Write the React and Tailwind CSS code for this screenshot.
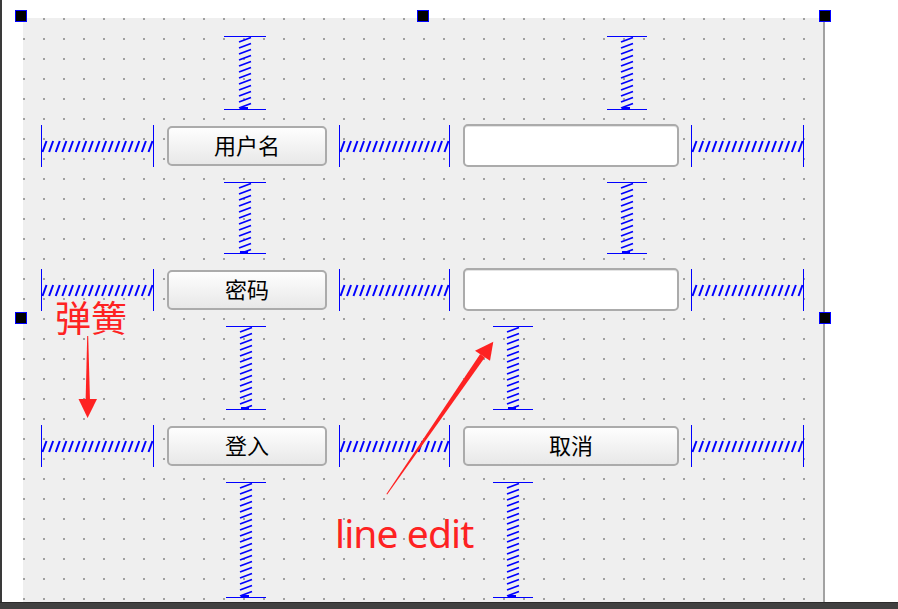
const BLUE = '#0000ff'
const RED = '#fe2222'

function HSpring({ w }) {
  const n = Math.round((w - 7) / 6.6) + 1
  const step = (w - 7) / (n - 1)
  return (
    <svg width={w} height={42} className="block">
      <line x1="0.5" y1="0" x2="0.5" y2="42" stroke={BLUE} />
      <line x1={w - 0.5} y1="0" x2={w - 0.5} y2="42" stroke={BLUE} />
      {Array.from({ length: n }, (_, i) => {
        const x = 1.5 + i * step
        return <line key={i} x1={x} y1="27" x2={x + 4} y2="16" stroke={BLUE} strokeWidth="2" />
      })}
    </svg>
  )
}

function VSpring({ w, h }) {
  const cx = w / 2
  const n = Math.floor((h - 6) / 6) + 1
  return (
    <svg width={w} height={h} className="block">
      <line x1="0" y1="0.5" x2={w} y2="0.5" stroke={BLUE} />
      <line x1="0" y1={h - 0.5} x2={w} y2={h - 0.5} stroke={BLUE} />
      {Array.from({ length: n }, (_, i) => {
        const y = 1.5 + i * 6
        return <line key={i} x1={cx - 6} y1={y + 4.5} x2={cx + 6} y2={y} stroke={BLUE} strokeWidth="1.8" />
      })}
      <rect x={cx - 5} y={h - 3} width="8" height="2" fill={BLUE} />
    </svg>
  )
}

function PushButton({ label, className = '' }) {
  return (
    <div className={`w-[160px] h-[40px] flex items-center justify-center pb-[4px] rounded-[5px] border-2 border-[#ababab] bg-linear-to-b from-[#fefefe] to-[#e8e8e8] text-[22px] text-black leading-none ${className}`}>
      {label}
    </div>
  )
}

function LineEdit() {
  return <div className="w-[216px] h-[43px] rounded-[5px] border-2 border-[#ababab] bg-white shadow-[inset_0_1px_0_#e4e4e4]" />
}

function Handle({ className }) {
  return <div className={`absolute w-[12px] h-[12px] border border-[#0000ff] bg-black ${className}`} />
}

export default function App() {
  return (
    <div className="relative w-[898px] h-[609px] bg-white overflow-hidden flex flex-col font-['Noto_Sans_CJK_SC',sans-serif]">
      <div className="flex flex-1 min-h-0">
        <div className="w-[2px] bg-[#3a3a3a]" />
        <div className="w-[21px]" />
        <div className="flex flex-col">
          <div className="h-[18px]" />

          {/* ── form canvas ── */}
          <div className="flex-1 w-[802px] border-r-2 border-[#a2a2a2] bg-[#efefef] bg-[conic-gradient(at_2px_2px,transparent_75%,#a0a0a0_0)] bg-size-[20px_20px] pl-[18px] pt-[18px]">
            <div className="grid grid-cols-[126px_172px_124px_228px_113px] grid-rows-[88px_58px_86px_58px_98px_58px_116px]">
              {/* row A */}
              <div className="row-start-1 col-start-2 ml-[57px]"><VSpring w={42} h={74} /></div>
              <div className="row-start-1 col-start-4 ml-[144px]"><VSpring w={40} h={74} /></div>

              {/* row B */}
              <div className="row-start-2 col-start-1 mt-[1px]"><HSpring w={113} /></div>
              <div className="row-start-2 col-start-2 mt-[2px]"><PushButton label="用户名" /></div>
              <div className="row-start-2 col-start-3 mt-[1px]"><HSpring w={111} /></div>
              <div className="row-start-2 col-start-4"><LineEdit /></div>
              <div className="row-start-2 col-start-5 mt-[1px]"><HSpring w={113} /></div>

              {/* row C */}
              <div className="row-start-3 col-start-2 ml-[57px]"><VSpring w={42} h={72} /></div>
              <div className="row-start-3 col-start-4 ml-[144px]"><VSpring w={40} h={72} /></div>

              {/* row D */}
              <div className="row-start-4 col-start-1 mt-[1px]"><HSpring w={113} /></div>
              <div className="row-start-4 col-start-2 mt-[2px]"><PushButton label="密码" /></div>
              <div className="row-start-4 col-start-3 mt-[1px]"><HSpring w={111} /></div>
              <div className="row-start-4 col-start-4"><LineEdit /></div>
              <div className="row-start-4 col-start-5 mt-[1px]"><HSpring w={113} /></div>

              {/* row E */}
              <div className="row-start-5 col-start-2 ml-[59px]"><VSpring w={40} h={84} /></div>
              <div className="row-start-5 col-start-4 ml-[30px]"><VSpring w={40} h={84} /></div>

              {/* row F */}
              <div className="row-start-6 col-start-1 mt-[1px]"><HSpring w={113} /></div>
              <div className="row-start-6 col-start-2 mt-[2px]"><PushButton label="登入" /></div>
              <div className="row-start-6 col-start-3 mt-[1px]"><HSpring w={111} /></div>
              <div className="row-start-6 col-start-4 mt-[2px]"><PushButton label="取消" className="w-[216px]" /></div>
              <div className="row-start-6 col-start-5 mt-[1px]"><HSpring w={113} /></div>

              {/* row G */}
              <div className="row-start-7 col-start-2 ml-[59px]"><VSpring w={40} h={116} /></div>
              <div className="row-start-7 col-start-4 ml-[30px]"><VSpring w={40} h={116} /></div>
            </div>
          </div>
        </div>
      </div>
      <div className="h-[7px] bg-[#404040] border-t border-[#2c2c2c]" />

      {/* ── selection handles ── */}
      <Handle className="left-[15px] top-[10px]" />
      <Handle className="left-[417px] top-[10px]" />
      <Handle className="left-[819px] top-[10px]" />
      <Handle className="left-[15px] top-[312px]" />
      <Handle className="left-[819px] top-[312px]" />

      {/* ── annotations ── */}
      <svg className="absolute left-0 top-0 pointer-events-none" width="898" height="609">
        <polygon points="87.2,336 88.2,336 90,401 85.6,401" fill={RED} />
        <polygon points="78.5,399 97,399 87.6,418" fill={RED} />
        <polygon points="386.4,494 387.2,494.5 484.8,357.4 480.2,354.1" fill={RED} />
        <polygon points="475,350.7 490,360.7 493.3,341.7" fill={RED} />
      </svg>
      <div className="absolute left-[55px] top-[298px] text-[36px] leading-none text-[#fe2222]">弹簧</div>
      <div className="absolute left-[335px] top-[513px] text-[39px] leading-none tracking-[-0.9px] text-[#fe2222] font-['Noto_Sans',sans-serif]">line edit</div>
    </div>
  )
}
